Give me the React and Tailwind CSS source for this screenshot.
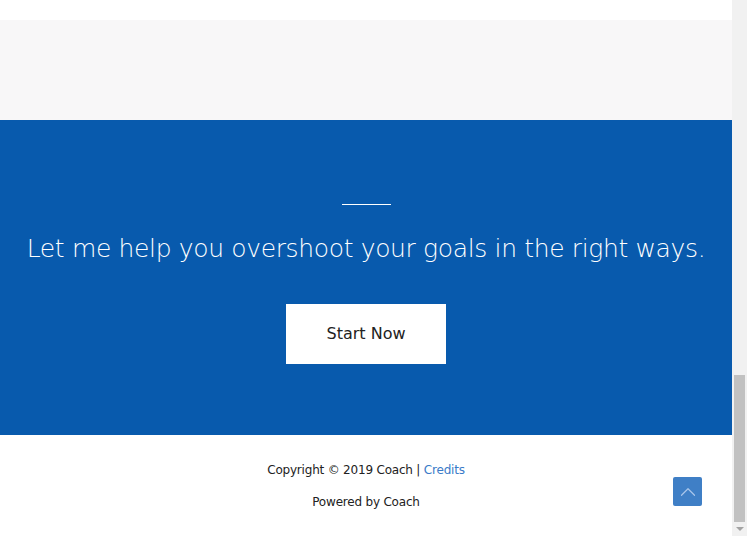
import { ChevronUp } from 'lucide-react';

const font = { fontFamily: '"DejaVu Sans", "Open Sans", sans-serif' };

const Scrollbar = () => (
  <div className="w-[15px] h-full bg-[#f1f1f1] flex flex-col items-center">
    <div className="flex-1" />
    <div className="w-[11px] h-[147px] bg-[#c1c1c1]" />
    <div className="h-[14px] flex items-center justify-center">
      <div className="w-0 h-0 border-l-[4px] border-r-[4px] border-t-[4px] border-l-transparent border-r-transparent border-t-[#a3a3a3]" />
    </div>
  </div>
);

const CallToAction = () => (
  <section className="h-[315px] bg-[#085aad] flex flex-col items-center pt-[84px]">
    <div className="w-[49px] h-px bg-white" />
    <h2 className="mt-[27px] text-[25px] leading-[34px] font-light text-white tracking-[-0.35px] whitespace-nowrap">
      Let me help you overshoot your goals in the right ways.
    </h2>
    <button className="mt-[38px] w-[160px] h-[60px] bg-white text-[#222] text-[16px]">
      Start Now
    </button>
  </section>
);

const Footer = () => (
  <footer className="relative h-[101px] bg-white flex flex-col items-center pt-[27px] text-[12px] text-[#222] tracking-[-0.2px]">
    <p className="leading-[16px]">
      Copyright © 2019 Coach | <a className="text-[#3a7bc8]">Credits</a>
    </p>
    <p className="mt-[16px] leading-[16px]">Powered by Coach</p>
    <div className="absolute left-[673px] top-[42px] w-[29px] h-[29px] rounded-[2px] bg-[#3f7fc6] flex items-center justify-center">
      <ChevronUp size={26} strokeWidth={1.1} className="text-[#a9c6ea]" />
    </div>
  </footer>
);

export default function App() {
  return (
    <div className="w-[747px] h-[536px] flex overflow-hidden" style={font}>
      <main className="w-[732px] flex flex-col">
        <div className="h-[20px] bg-white" />
        <div className="h-[100px] bg-[#f8f7f8]" />
        <CallToAction />
        <Footer />
      </main>
      <Scrollbar />
    </div>
  );
}
